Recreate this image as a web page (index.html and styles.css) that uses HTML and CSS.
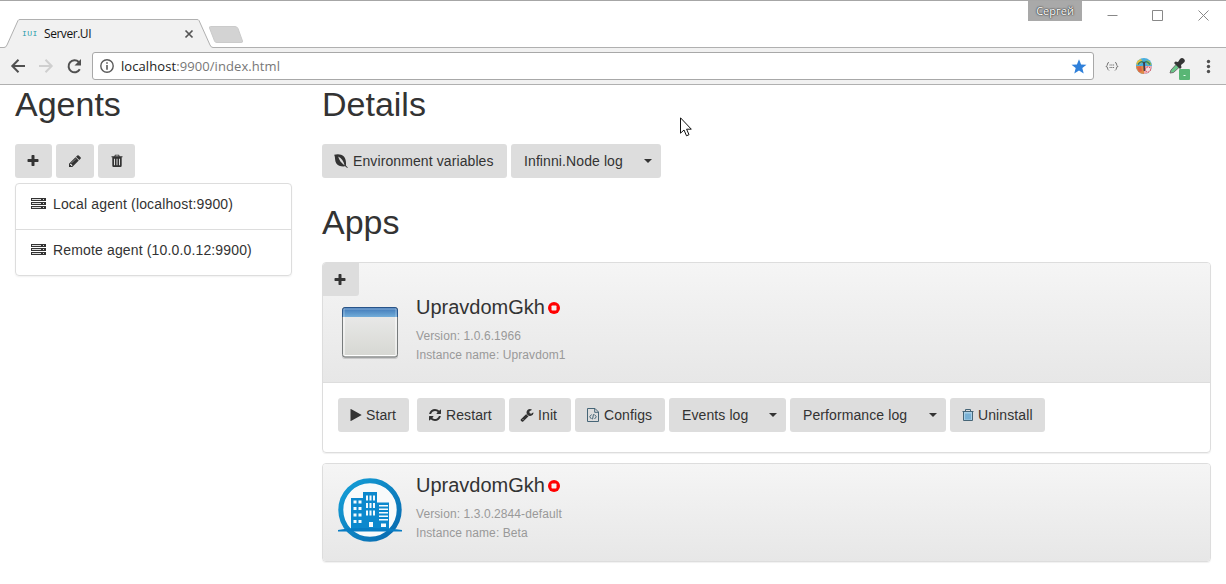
FILE: index.html
```
<!DOCTYPE html>
<html lang="en">
<head>
<meta charset="utf-8">
<title>Server.UI</title>
<link rel="stylesheet" href="styles.css">
</head>
<body>
<svg class="sprite" aria-hidden="true">
  <symbol id="plus" viewBox="0 0 1792 1792"><path d="M1600 736v192q0 40-28 68t-68 28h-416v416q0 40-28 68t-68 28h-192q-40 0-68-28t-28-68v-416h-416q-40 0-68-28t-28-68v-192q0-40 28-68t68-28h416v-416q0-40 28-68t68-28h192q40 0 68 28t28 68v416h416q40 0 68 28t28 68z"/></symbol>
  <symbol id="pencil" viewBox="0 0 1792 1792"><path d="M491 1536l91-91-235-235-91 91v107h128v128h107zm523-928q0-22-22-22-10 0-17 7l-542 542q-7 7-7 17 0 22 22 22 10 0 17-7l542-542q7-7 7-17zm-54-192l416 416-832 832h-416v-416zm683 96q0 53-37 90l-166 166-416-416 166-165q36-38 90-38 53 0 91 38l235 234q37 39 37 91z"/></symbol>
  <symbol id="trash" viewBox="0 0 14 14"><path fill-rule="evenodd" d="M1.500 3.200V2.200H4.300L5 .8H9L9.700 2.200H12.500V3.200H11.700V11.500Q11.700 13 10.500 13H3.500Q2.300 13 2.300 11.500V3.200ZM5.400 2.200H8.600L8.300 1.600H5.700ZM4 4.700V11.200H5V4.700ZM6.500 4.700V11.200H7.500V4.700ZM9 4.700V11.200H10V4.700Z"/></symbol>
  <symbol id="play" viewBox="0 0 1792 1792"><path d="M1576 927l-1328 738q-23 13-39.500 3t-16.500-36v-1472q0-26 16.500-36t39.500 3l1328 738q23 13 23 31t-23 31z"/></symbol>
  <symbol id="refresh" viewBox="0 0 1792 1792"><path d="M1639 1056q0 5-1 7-64 268-268 434.500t-478 166.500q-146 0-282.500-55t-243.500-157l-129 129q-19 19-45 19t-45-19-19-45v-448q0-26 19-45t45-19h448q26 0 45 19t19 45-19 45l-137 137q71 66 161 102t187 36q134 0 250-65t186-179q11-17 53-117 8-23 30-23h192q13 0 22.500 9.500t9.500 22.500zm25-800v448q0 26-19 45t-45 19h-448q-26 0-45-19t-19-45 19-45l138-138q-148-137-349-137-134 0-250 65t-186 179q-11 17-53 117-8 23-30 23h-199q-13 0-22.500-9.500t-9.500-22.500v-7q65-268 270-434.500t480-166.500q146 0 284 55.500t245 156.500l130-129q19-19 45-19t45 19 19 45z"/></symbol>
  <symbol id="wrench" viewBox="0 0 1792 1792"><path d="M448 1472q0-26-19-45t-45-19-45 19-19 45 19 45 45 19 45-19 19-45zm644-420l-682 682q-37 37-90 37-52 0-91-37l-106-108q-38-36-38-90 0-53 38-91l681-681q39 98 114.500 173.500t173.500 114.500zm634-435q0 39-23 106-47 134-164.500 217.500t-258.500 83.500q-185 0-316.500-131.500t-131.500-316.500 131.500-316.500 316.500-131.500q58 0 121.500 16.500t107.500 46.500q16 11 16 28t-16 28l-293 169v224l193 107q5-3 79-48.500t135.500-81 70.500-35.500q15 0 23.500 10t8.500 25z"/></symbol>
  <symbol id="leaf" viewBox="0 0 14 14"><path fill-rule="evenodd" d="M.2.800C3.500-.2 7.500 0 9.900 2.600C12 5 12.200 8.500 11.900 11.600L13.800 13.600L13.200 14L11.200 12.300C7.500 12.700 4 12 2.200 9.300C.6 6.600 1.500 3.500.2.800ZM4.200 2.600C4.900 5.600 7 9 10.600 11.400C9.700 7.500 7.500 4.400 4.200 2.600Z"/></symbol>
  <symbol id="server" viewBox="0 0 15 12"><path d="M0 0H15V3H0ZM0 4H15V7H0ZM0 8H15V11H0Z"/><path class="slot" d="M1 1H10V2H1ZM1 5H10V6H1ZM1 9H10V10H1ZM12 1H13V2H12ZM12 5H13V6H12ZM12 9H13V10H12Z"/></symbol>
  <symbol id="code" viewBox="0 0 12 14"><path class="line" d="M.5.500H8L11.500 4V13.500H.5ZM7.700.5V4.300H11.500M4.500 6.500L2.700 8.800L4.500 11M7.500 6.500L9.300 8.800L7.500 11M6.500 6.200L5.500 11.300"/></symbol>
  <symbol id="stop" viewBox="0 0 12 12"><circle cx="6" cy="6" r="6" fill="#f00"/><rect x="3.500" y="3.500" width="5" height="5" rx=".8" fill="#f5eeee"/></symbol>
</svg>

<header class="browser">
  <div class="strip">
    <svg class="tabs" width="250" height="29" viewBox="0 0 250 29">
      <path d="M0 28.500H4Q6 28.500 7 26L18 1.500Q18.500.5 20 .5H197Q198.500.5 199 1.500L210 26Q211 28.500 213 28.500V29H0Z" fill="#f1f1f1"/>
      <path d="M0 28.500H4Q6 28.500 7 26L18 1.500Q18.500.5 20 .5H197Q198.500.5 199 1.500L210 26Q211 28.500 213 28.500H250" fill="none" stroke="#b0b0b0"/>
      <path d="M210.500 7.500H235Q237 7.500 238 9.500L242.500 22Q243 23.500 241 23.500H217Q215 23.500 214.500 22L209.500 9Q209 7.500 210.500 7.500Z" fill="#d3d3d3" stroke="#cbcbcb"/>
      <path d="M185.500 11.500L192.500 18.500M192.500 11.500L185.500 18.500" stroke="#555" stroke-width="1.700"/>
    </svg>
    <span class="favicon">IUI</span>
    <span class="tab-title">Server.UI</span>
    <span class="user">Сергей</span>
    <svg class="winctl" width="104" height="12" viewBox="0 0 104 12" fill="none" stroke="#888">
      <path d="M.5 6.500H10.500M45.500 1.500H55.500V11.500H45.500ZM91.500 1.500L101.500 11.500M101.500 1.500L91.500 11.500"/>
    </svg>
  </div>
  <div class="toolbar">
    <svg class="nav" width="76" height="16" viewBox="0 0 76 16" fill="none" stroke-width="2">
      <path d="M15 8H2.500M8.500 1.800L2.300 8L8.500 14.200" stroke="#505050"/>
      <path d="M29 8H41.500M35.500 1.800L41.700 8L35.500 14.200" stroke="#cfcfcf"/>
      <path d="M69.800 11.300A6 6 0 1 1 68.800 4" stroke="#505050"/>
      <path d="M71 1V7.500H64.500Z" fill="#505050"/>
    </svg>
    <div class="omnibox">
      <svg width="14" height="14" viewBox="0 0 14 14"><circle cx="7" cy="7" r="6.200" fill="none" stroke="#5a5a5a" stroke-width="1.400"/><path d="M6.200 3.200H7.800V4.800H6.200ZM6.200 6H7.800V10.800H6.200Z" fill="#5a5a5a"/></svg>
      <span class="url"><b>localhost</b>:9900/index.html</span>
      <svg class="star" width="16" height="15" viewBox="0 0 16 15"><path d="M8 .3L10.100 5.400L15.500 5.700L11.300 9.100L12.700 14.500L8 11.600L3.300 14.500L4.700 9.100L.5 5.700L5.900 5.400Z" fill="#2f80da"/></svg>
    </div>
    <svg class="ext" width="116" height="24" viewBox="0 0 116 24">
      <g fill="none" stroke="#777"><path d="M5 6.500Q3.500 6.500 3.500 8T2 10.500Q3.500 10.500 3.500 12T5 14.500M11 6.500Q12.500 6.500 12.500 8T14 10.500Q12.500 10.500 12.500 12T11 14.500"/><path stroke-dasharray="1.200 .5" d="M5.500 9H10.500M5.500 11.500H10.500"/></g>
      <circle cx="40" cy="10" r="8" fill="#49aede"/>
      <path d="M32 10A8 8 0 0 0 40 18V10Z" fill="#df8a45"/><path d="M40 18A8 8 0 0 0 48 10H40Z" fill="#f1a8b0"/>
      <path d="M32.200 8Q33 4 37 3L39 6L34 9Z" fill="#e8c13b"/><path d="M41 5Q46 3 47.500 9L44 9Z" fill="#a5bd48"/><path d="M34 8.500Q37 4 40 7Q43 4 46 8.500" stroke="#287c75" stroke-width="1.500" fill="none"/>
      <path d="M40 6L40.500 15" stroke="#403e4c" stroke-width="1.800"/><path d="M33 11L37 10L38 15L35 16Z" fill="#df6547"/><circle cx="44" cy="13.500" r="2.500" fill="#f4dde0" stroke="#d14250" stroke-dasharray="1.500 1"/>
      <path d="M66 17L67 14L73 7.500L76 10.500L69.500 16.500Z" fill="#69c789" stroke="#707070"/>
      <path d="M71.500 5.500L74 6L76 3Q78 1 80 3T79.500 7L77 9L77.500 11.500L76 13L70 7Z" fill="#353535"/>
      <rect x="75" y="13" width="11" height="11" rx="1" fill="#59b675"/><path d="M79.500 19.500H81.500" stroke="#e7fff0"/>
      <g fill="#505050"><circle cx="104.500" cy="5.500" r="1.700"/><circle cx="104.500" cy="10.500" r="1.700"/><circle cx="104.500" cy="15.500" r="1.700"/></g>
    </svg>
  </div>
</header>

<main class="page">
  <section class="agents">
    <h1>Agents</h1>
    <div class="row">
      <button class="btn w37 only"><svg class="ico"><use href="#plus"/></svg></button>
      <button class="btn w38"><svg class="ico"><use href="#pencil"/></svg></button>
      <button class="btn w37"><svg class="ico"><use href="#trash"/></svg></button>
    </div>
    <ul class="list">
      <li><svg class="server"><use href="#server"/></svg><span>Local agent (localhost:9900)</span></li>
      <li><svg class="server"><use href="#server"/></svg><span>Remote agent (10.0.0.12:9900)</span></li>
    </ul>
  </section>

  <section class="details">
    <h1>Details</h1>
    <div class="row">
      <button class="btn w185"><svg class="ico"><use href="#leaf"/></svg><span>Environment variables</span></button>
      <button class="btn split w150"><span>Infinni.Node log</span><i class="caret"></i></button>
    </div>
    <h1 class="apps-title">Apps</h1>

    <article class="panel">
      <div class="head">
        <button class="btn corner"><svg class="ico"><use href="#plus"/></svg></button>
        <div class="media">
          <svg class="pic" viewBox="0 0 64 64">
            <defs>
              <linearGradient id="bar" x2="0" y2="1"><stop stop-color="#3f78b8"/><stop offset="1" stop-color="#72add9"/></linearGradient>
              <linearGradient id="win" x2="0" y2="1"><stop stop-color="#ececec"/><stop offset="1" stop-color="#d6d7d2"/></linearGradient>
            </defs>
            <rect x="4" y="8" width="56" height="51" rx="3" fill="#bbb" opacity=".7"/>
            <rect x="4.500" y="7.500" width="55" height="49.500" rx="2.500" fill="url(#win)" stroke="#777b7c"/>
            <path d="M5 17V10Q5 8 7 8H57Q59 8 59 10V17Z" fill="url(#bar)"/>
            <path d="M4.500 17V10Q4.500 7.500 7 7.500H57Q59.500 7.500 59.500 10V17" fill="none" stroke="#285489"/>
            <path d="M6 17V54.500Q6 55.500 7 55.500H57Q58 55.500 58 54.500V17" fill="none" stroke="#fff"/>
            <path d="M6 17V9H58V17" fill="none" stroke="#fff" opacity=".35"/>
          </svg>
          <div class="info">
            <h2>UpravdomGkh<svg class="stop"><use href="#stop"/></svg></h2>
            <p>Version: 1.0.6.1966</p>
            <p>Instance name: Upravdom1</p>
          </div>
        </div>
      </div>
      <div class="actions">
        <button class="btn start"><svg class="ico"><use href="#play"/></svg><span>Start</span></button>
        <button class="btn w88"><svg class="ico"><use href="#refresh"/></svg><span>Restart</span></button>
        <button class="btn w62"><svg class="ico"><use href="#wrench"/></svg><span>Init</span></button>
        <button class="btn w90"><svg class="ico code"><use href="#code"/></svg><span>Configs</span></button>
        <button class="btn split w117"><span>Events log</span><i class="caret"></i></button>
        <button class="btn split w156"><span>Performance log</span><i class="caret"></i></button>
        <button class="btn w95"><svg class="ico bin" viewBox="0 0 14 14"><path d="M3 4H11V12H3Z" fill="#a9cfe6"/><path d="M5 5.500V11.500M7 5.500V11.500M9 5.500V11.500" stroke="#4a94c4"/><path d="M1.500 3.500H12.500M4.500 3V1.500H9.500V3M2.500 4V12.500H11.500V4" fill="none" stroke="#466577"/></svg><span>Uninstall</span></button>
      </div>
    </article>

    <article class="panel second">
      <div class="head">
        <div class="media">
          <svg class="pic" viewBox="0 0 64 64">
            <defs><linearGradient id="ring" x2="1" y2="1"><stop stop-color="#15a0d8"/><stop offset="1" stop-color="#0868ae"/></linearGradient></defs>
            <circle cx="32" cy="32" r="29.200" fill="#f8fafb" stroke="url(#ring)" stroke-width="5"/>
            <path d="M13 20H25V14H39V24.500H51V51H13Z" fill="#0c88cd"/>
            <path d="M15.500 22.500H18.500V25.500H15.500ZM20.500 22.500H23.500V25.500H20.500ZM15.500 29H18.500V32H15.500ZM20.500 29H23.500V32H20.500ZM15.500 35.500H18.500V38.500H15.500ZM20.500 35.500H23.500V38.500H20.500ZM15.500 42H18.500V45H15.500ZM20.500 42H23.500V45H20.500ZM28 17.500H30V22.500H28ZM31.500 17.500H33.500V22.500H31.500ZM35 17.500H37V22.500H35ZM28 25H30V30H28ZM31.500 25H33.500V30H31.500ZM35 25H37V30H35ZM28 32.500H30V37.500H28ZM31.500 32.500H33.500V37.500H31.500ZM35 32.500H37V37.500H35ZM31 44H35V49H31ZM41 27H50V28.500H41ZM41 30.500H50V32H41ZM41 34H50V35.500H41ZM41 37.500H50V39H41ZM41 41H50V42.500H41ZM43 45.500H48V49H43Z" fill="#f5fbfe"/>
            <path d="M0 52Q10 49.500 32 50T64 52V53.500H0Z" fill="#087cc3"/>
          </svg>
          <div class="info">
            <h2>UpravdomGkh<svg class="stop"><use href="#stop"/></svg></h2>
            <p>Version: 1.3.0.2844-default</p>
            <p>Instance name: Beta</p>
          </div>
        </div>
      </div>
    </article>
  </section>

  <svg class="pointer" width="13" height="20" viewBox="0 0 13 20"><path d="M.5 .8V16.200L4 13L6.500 18.800L9 17.700L6.600 12.200H11.300Z" fill="#fff" stroke="#111"/></svg>
</main>
</body>
</html>
```
FILE: styles.css
```
* { box-sizing: border-box; }
body { margin: 0; height: 584px; overflow: hidden; background: #fff; color: #333; font: 14px/20px "Liberation Sans", Arial, sans-serif; }
h1, h2, p, ul { margin: 0; padding: 0; font-weight: 400; }
svg { display: block; flex: none; }
.sprite { position: absolute; width: 0; height: 0; }

.browser { height: 85px; border-top: 1px solid #a6a6a6; font-family: "Open Sans", "Noto Sans", sans-serif; }
.strip { position: relative; display: flex; height: 47px; border-bottom: 1px solid #b0b0b0; }
.tabs { position: absolute; left: 0; bottom: -1px; }
.favicon, .tab-title { position: relative; margin-top: 23px; white-space: nowrap; }
.favicon { margin-left: 22px; width: 22px; color: #279cab; font: 400 8px/20px "Liberation Mono", monospace; letter-spacing: .4px; }
.tab-title { color: #111; font-size: 12px; letter-spacing: -.45px; }
.user { margin-left: auto; width: 54px; height: 20px; background: #a9a9a9; color: #fff; font-size: 11px; line-height: 20px; text-align: center; text-shadow: 0 0 2px #222, 0 0 1px #222; }
.winctl { margin: 8px 15px 0 25px; }
.toolbar { display: flex; height: 37px; padding: 4px 0 0 10px; background: #f1f1f1; border-bottom: 1px solid #b0b0b0; }
.nav { margin: 6px 6px 0 0; }
.omnibox { display: flex; align-items: center; width: 1002px; height: 28px; padding: 0 6px 0 7px; background: #fff; border: 1px solid #a8a8a8; border-radius: 3px; }
.url { margin-left: 7px; color: #777; font-size: 13px; letter-spacing: .08px; }
.url b { color: #222; font-weight: 400; }
.star { margin-left: auto; }
.ext { margin: 4px 0 0 10px; }

.page { position: relative; display: flex; padding: 0 15px; gap: 30px; }
.agents { width: 277px; }
.details { width: 889px; }
h1 { height: 38px; margin-bottom: 21px; font-size: 34px; line-height: 39px; }
.apps-title { margin-top: 25px; }
.row { display: flex; gap: 4px; }
.btn { display: flex; flex: none; align-items: center; height: 34px; padding: 0 0 0 12px; gap: 5px; border: 0; border-radius: 3px; background: #ddd; color: #333; font: 14px/20px "Liberation Sans", Arial, sans-serif; letter-spacing: .1px; white-space: nowrap; }
.ico { width: 14px; height: 14px; fill: currentColor; }
.only { padding-left: 11px; }
.line { fill: none; stroke: #466577; stroke-width: 1; }
.w37 { width: 37px; } .w38 { width: 38px; } .w62 { width: 62px; } .w88 { width: 88px; }
.w90 { width: 90px; } .w95 { width: 95px; } .w117 { width: 117px; } .w150 { width: 150px; }
.w156 { width: 156px; } .w185 { width: 185px; }
.split { justify-content: space-between; padding: 0 9px 0 13px; }
.caret { border: 4px solid transparent; border-top-color: #333; border-bottom: 0; }

.list { margin-top: 5px; border: 1px solid #ddd; border-radius: 4px; list-style: none; box-shadow: 0 1px 2px rgba(0,0,0,.06); }
.list li { display: flex; align-items: flex-start; height: 45px; padding: 10px 15px; gap: 7px; letter-spacing: .15px; }
.list li + li { height: 46px; border-top: 1px solid #ddd; }
.server { width: 15px; height: 12px; margin-top: 4px; fill: #333; }
.slot { fill: #ddd; }

.panel { border: 1px solid #ddd; border-radius: 4px; box-shadow: 0 1px 1px rgba(0,0,0,.06); overflow: hidden; }
.head { background: linear-gradient(#f5f5f5, #e7e7e7); }
.panel:not(.second) .head { border-bottom: 1px solid #ddd; }
.corner { width: 36px; height: 33px; padding-left: 10px; border-radius: 0 0 3px 0; }
.media { display: flex; height: 86px; padding: 0 15px; gap: 14px; }
.second { margin-top: 10px; }
.second .head { padding-top: 10px; height: 97px; }
.pic { width: 64px; height: 64px; margin-top: 4px; }
h2 { display: flex; align-items: center; height: 22px; margin-bottom: 9px; gap: 3px; font-size: 20px; line-height: 22px; }
.stop { width: 12px; height: 12px; margin-top: 2px; }
.info p { color: #999; font-size: 12px; line-height: 19px; letter-spacing: .09px; }
.actions { display: flex; height: 69px; padding: 15px; gap: 4px; }
.start { width: 71px; margin-right: 4px; }
.start, .w88, .w62, .w90, .w95 { padding-left: 11px; gap: 3px; }
.w88, .w62 { gap: 4px; }
.w90 { padding-left: 12px; gap: 5px; }
.code { width: 12px; }

.pointer { position: absolute; left: 680px; top: 32px; }
```
